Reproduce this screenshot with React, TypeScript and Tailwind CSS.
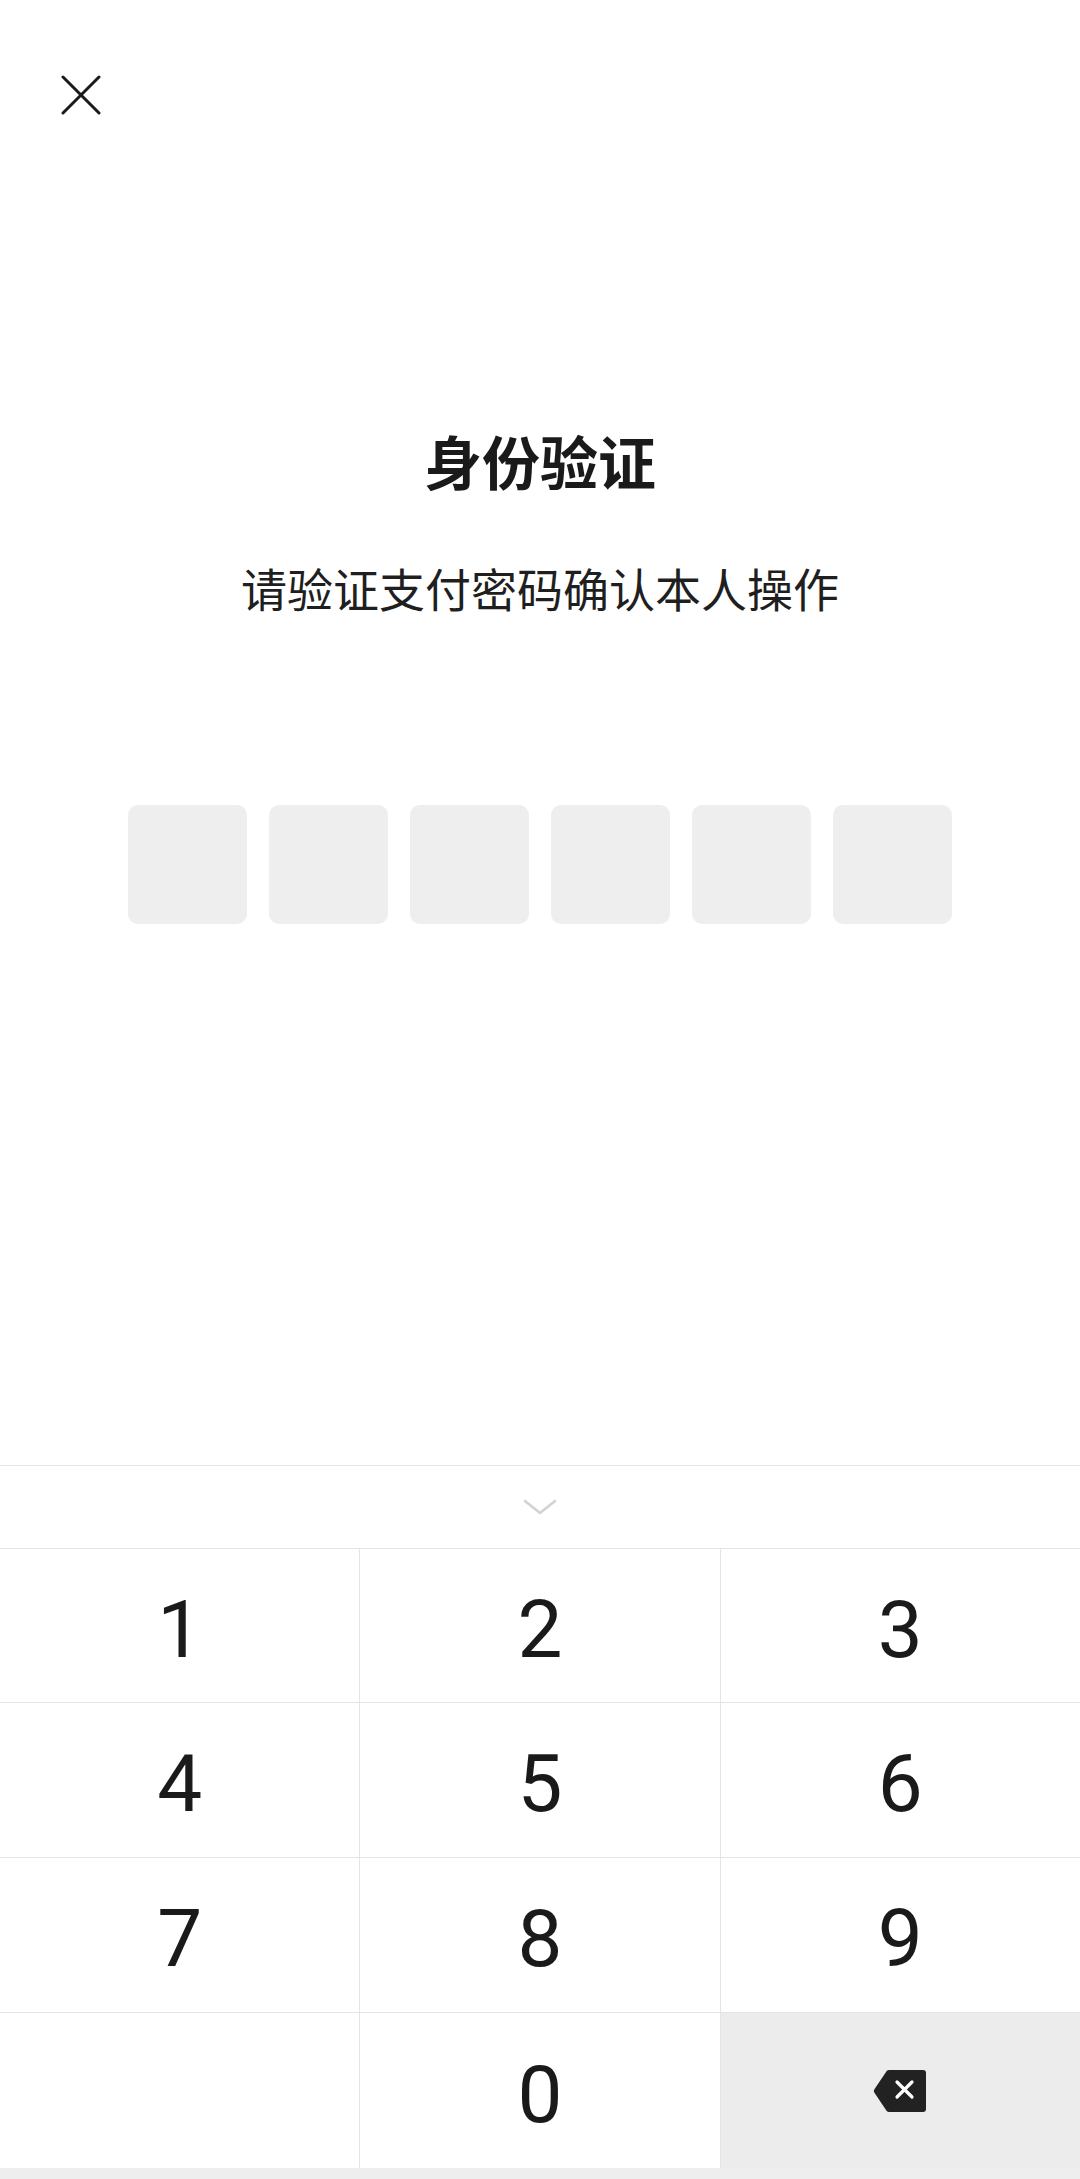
import React from "react";

const keys = ["1", "2", "3", "4", "5", "6", "7", "8", "9", "", "0", "del"];

const CloseIcon = () => (
    <svg width="40" height="40" viewBox="0 0 40 40" fill="none">
        <path d="M2 2L38 38M38 2L2 38" stroke="#1a1a1a" strokeWidth="3" strokeLinecap="round"/>
    </svg>
);

const DeleteIcon = () => (
    <svg width="56" height="46" viewBox="0 0 56 46" fill="none">
        <path d="M17 2H51a3 3 0 0 1 3 3V41a3 3 0 0 1-3 3H17a3 3 0 0 1-2.3-1.1L2.6 25a3 3 0 0 1 0-4L14.7 3.1A3 3 0 0 1 17 2Z"
              fill="#222222"/>
        <path d="M25 14L40 29M40 14L25 29" stroke="white" strokeWidth="3.2" strokeLinecap="round"/>
    </svg>
);

const App: React.FC = () => {
    return (
        <div className="w-[1080px] h-[2179px] bg-white flex flex-col"
             style={{fontFamily: '"Noto Sans CJK SC", "Noto Sans", sans-serif'}}>
            <div className="pl-[61px] pt-[75px]">
                <CloseIcon/>
            </div>

            <h1 className="mt-[316px] text-center text-[58px] leading-none font-bold text-[#1a1a1a]">
                身份验证
            </h1>
            <p className="mt-[75px] text-center text-[46px] leading-none text-[#1f1f1f]">
                请验证支付密码确认本人操作
            </p>

            <div className="mt-[195px] flex justify-center gap-[22px]">
                {[0, 1, 2, 3, 4, 5].map(i => (
                    <div key={i} className="w-[119px] h-[119px] rounded-[10px] bg-[#eeeeee]"/>
                ))}
            </div>

            <div className="mt-auto border-t border-[#e6e6e6]">
                <div className="h-[82px] flex items-center justify-center">
                    <svg width="36" height="18" viewBox="0 0 36 18" fill="none">
                        <path d="M3 3L18 15L33 3" stroke="#d2d2d2" strokeWidth="2.6" strokeLinecap="round"
                              strokeLinejoin="round"/>
                    </svg>
                </div>
                <div className="grid grid-cols-3 grid-rows-[153px_154px_154px_155px] gap-px bg-[#e4e4e4] border-t border-[#e4e4e4]">
                    {keys.map((k, i) => (
                        <div key={i}
                             className={`flex items-center justify-center ${k === "del" ? "bg-[#ececec]" : "bg-white"}`}>
                            {k === "del" ? <DeleteIcon/> : (
                                <span className="pt-[8px] text-[80px] leading-none text-[#1a1a1a]"
                                      style={{fontFamily: 'Roboto, "Liberation Sans", sans-serif'}}>{k}</span>
                            )}
                        </div>
                    ))}
                </div>
                <div className="h-[11px] bg-[#eeeeee]"/>
            </div>
        </div>
    );
}

export default App
